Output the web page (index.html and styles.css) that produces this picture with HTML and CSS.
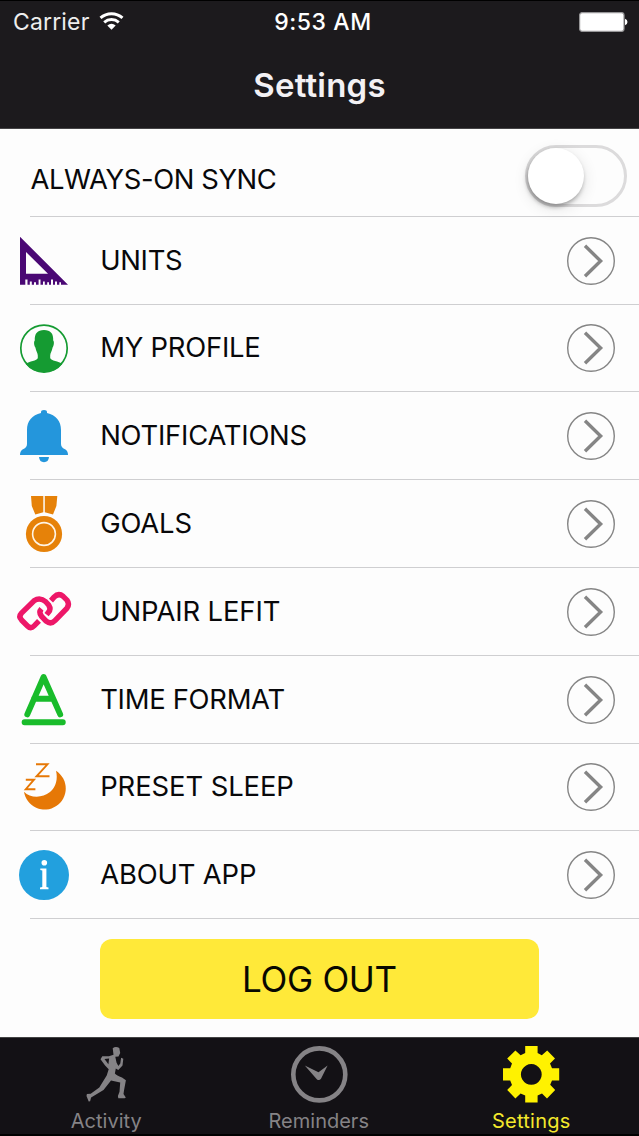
FILE: index.html
```html
<!DOCTYPE html>
<html lang="en">
<head>
<meta charset="utf-8">
<title>Settings</title>
<link rel="stylesheet" href="styles.css">
</head>
<body>
<svg class="defs" width="0" height="0">
  <symbol id="go" viewBox="0 0 50 50">
    <circle cx="25" cy="25" r="23.3" fill="none" stroke="#858585" stroke-width="1.4"/>
    <path d="M19 9.8 34.6 25 19 40.2" fill="none" stroke="#858585" stroke-width="3.4"/>
  </symbol>
</svg>
<div class="screen">
  <header class="header">
    <div class="status">
      <div class="carrier"><span class="carrier-name">Carrier</span>
        <svg class="wifi" width="26" height="20" viewBox="0 0 26 20"><g fill="none" stroke="#fff" stroke-width="2.9"><path d="M1.5 6.9a16.5 16.5 0 0 1 22 0"/><path d="M5.2 11.3a11 11 0 0 1 14.6 0"/></g><path d="M8.3 14.5a6.5 6.5 0 0 1 8.4 0L12.5 18.8z" fill="#fff"/></svg>
      </div>
      <span class="time">9:53 AM</span>
      <svg class="battery" width="50" height="20" viewBox="0 0 50 20"><rect x=".6" y=".6" width="44.4" height="18.8" rx="2.6" fill="#fff" stroke="#969597" stroke-width="1.2"/><path d="M46 6.8q2.5.8 2.5 3.2t-2.5 3.2z" fill="#fff"/></svg>
    </div>
    <h1 class="title"><span>Settings</span></h1>
  </header>
  <main class="list">
    <div class="row row-sync"><span class="label l-sync">ALWAYS-ON SYNC</span><span class="switch"><span class="knob"></span></span></div>
    <div class="row">
      <svg class="icon" viewBox="0 217 88 88"><path fill="#4a0874" fill-rule="evenodd" d="M20 236.8 68 284.7H61V282.3H59.3V284.7H57V281.5H55V284.7H53V279.5H51V284.7H49V282.3H47.2V284.7H44.8V281.5H43V284.7H40.5V279.5H38.6V284.7H36V282.3H34V284.7H31.8V281.5H29.8V284.7H27.5V279.5H25.3V284.7H20zM26 252V273.7H48z"/></svg>
      <span class="label l-units">UNITS</span><svg class="go"><use href="#go"/></svg></div>
    <div class="row">
      <svg class="icon" viewBox="0 305 88 88"><circle cx="44" cy="348.3" r="23.2" fill="none" stroke="#159b32" stroke-width="1.7"/><path fill="#159b32" d="M44 330C50.5 330 53.6 333.5 53.2 340.5 54.4 341.5 54 345.5 52.6 347.5 52 351 50.2 353 50.2 355.5V358C51 360.8 58.5 361.2 62.6 363.8A23.4 23.4 0 0 1 25.4 363.8C29.5 361.2 37 360.8 37.8 358V355.5C37.8 353 36 351 35.4 347.5 34 345.5 33.6 341.5 34.8 340.5 34.4 333.5 37.5 330 44 330z"/></svg>
      <span class="label l-profile">MY PROFILE</span><svg class="go"><use href="#go"/></svg></div>
    <div class="row">
      <svg class="icon" viewBox="0 392 88 88"><path fill="#2496dc" d="M41 413V412Q41 410 44 410T47 412V413C56 415 61 421 61 430V444Q61 447.5 65.5 449.5 68 451 68 455H20Q20 451 22.5 449.5 27 447.5 27 444V430C27 421 32 415 41 413zM39 457H49Q48.5 462.2 44 462.2T39 457z"/></svg>
      <span class="label l-notif">NOTIFICATIONS</span><svg class="go"><use href="#go"/></svg></div>
    <div class="row">
      <svg class="icon" viewBox="0 480 88 88"><path fill="#e68209" d="M31 496H43.3V512.2L35.3 514.5 31.8 506zM44.8 496H57.3L56.4 506 53 514.5 44.8 512.2z"/><circle cx="44" cy="534" r="18.1" fill="#e68209"/><circle cx="44" cy="534" r="11.4" fill="none" stroke="#fff4e4" stroke-width="1.6"/></svg>
      <span class="label l-goals">GOALS</span><svg class="go"><use href="#go"/></svg></div>
    <div class="row">
      <svg class="icon" viewBox="0 568 88 88"><g fill="none" stroke="#ed1768" stroke-width="5.4"><path d="M39 620.8 34 626Q30.8 629.2 27.5 626L21.5 620Q18.3 616.6 21.5 613.2L34 600.8Q40 596.8 45.8 601.8L48.8 605.2Q51.4 609.2 48.4 612.4L46.6 614.6"/><path d="M51 600.6 54 597.2Q58.5 592.6 63.2 596.4L67 600.2Q70 604.3 67 608.2L55.2 620.4Q50.8 625 46.2 621.2L41.6 616.4Q38.2 612.4 41.4 608.8"/></g></svg>
      <span class="label l-unpair">UNPAIR LEFIT</span><svg class="go"><use href="#go"/></svg></div>
    <div class="row">
      <svg class="icon" viewBox="0 656 88 88"><g fill="none" stroke="#19bc2b" stroke-width="5.9" stroke-linecap="round" stroke-linejoin="round"><path d="M27.3 714.4 43.6 677 60.2 714.4M34 698.7H53M24.6 722.3H62.8"/></g></svg>
      <span class="label l-format">TIME FORMAT</span><svg class="go"><use href="#go"/></svg></div>
    <div class="row">
      <svg class="icon" viewBox="0 744 88 88"><path fill="#e67806" d="M56 771.8A21 21 0 1 1 24 792.7C30 799 42 799.5 50 793 56 788 58 780 56 771.8z"/><path d="M36 765.3H47.5L36.5 777.3H49.5M25.8 780.7H34L25.8 790.2H35.4" fill="none" stroke="#e67806" stroke-width="1.9"/></svg>
      <span class="label l-sleep">PRESET SLEEP</span><svg class="go"><use href="#go"/></svg></div>
    <div class="row">
      <svg class="icon" viewBox="0 831.2 88 88"><circle cx="44" cy="875.3" r="25" fill="#22a0de"/><circle cx="44.3" cy="863" r="2.8" fill="#fff"/><path fill="#fff" d="M40.3 868.6H46.4V887.2L48.5 887.8V889.4H40V887.8L42.3 887.2V870.8L40.3 870.2z"/></svg>
      <span class="label l-about">ABOUT APP</span><svg class="go"><use href="#go"/></svg></div>
    <div class="action"><button class="logout"><span>LOG OUT</span></button></div>
  </main>
  <nav class="tabs">
    <a class="tab"><svg viewBox="-2.5 0 60 60"><g fill="#858386"><path d="M34.2 4.2Q37.2 1.8 40.8 4L41.7 9 40 12.5 36.8 12.7 38 18.5 39.8 22 41.8 19.5 42.6 13.8 44.8 14.8 44 21.5 39.8 26 37.3 24.6 36.4 29.4Q38 31.2 43.5 33.5L47.4 36.2 45.5 46.5 45 50 47.3 53.4 46.2 54.3 39.8 54.2 39.4 52 41 47.8 41.7 38.5 32.5 36.6 25 46 12.6 53.4 11.6 57.2 10.2 57.4 8 52 8.4 50 12.2 49.8 20.8 43.5 28.2 31.4 30.2 25.2 26.6 21.6 22 15.3 23.8 12.2 30.4 12.2 35 10.7z"/></g><path d="M26 14.9 30.6 14.5 29.9 20.2z" fill="#141216"/></svg><span class="t-activity">Activity</span></a>
    <a class="tab"><svg viewBox="0 0 60 60"><circle cx="30.3" cy="30.4" r="26" fill="none" stroke="#858386" stroke-width="4.6"/><path fill="#858386" d="M15.8 21.5 29.5 28.2 38.6 21.4 32 34.8Q30 37.2 27.8 35.2z"/></svg><span class="t-reminders">Reminders</span></a>
    <a class="tab active"><svg viewBox="0 0 60 60"><path fill="#fff200" fill-rule="evenodd" d="M24.2 2H36.6V9L40.8 11.2 46.2 6.4 54 14.6 49 19.6 51 24.3H58.2V36.6H51L49.2 40.8 54.2 46 46 54.4 41 49.4 36.6 51.4V58.4H24.2V51.4L19.6 49.4 14.4 54.4 6.2 46 11 41 9.2 36.6H2V24.3H9.2L11 19.6 6.2 14.6 14.4 6.4 19.6 11.2 24.2 9zM30.3 20A10.4 10.4 0 1 0 30.31 20z"/></svg><span class="t-settings">Settings</span></a>
  </nav>
</div>
</body>
</html>
```
FILE: styles.css
```css
* { box-sizing: border-box; }
body { margin: 0; background: #fdfdfd; color: #08080a; font-family: Inter, "Liberation Sans", sans-serif; }
.defs { display: block; height: 0; }
.screen { width: 639px; height: 1136px; display: flex; flex-direction: column; overflow: hidden; }

.header { height: 129px; background: #1c1a1d; border-top: 1px solid #000; border-bottom: 1px solid #454446; color: #fff; }
.status { height: 40px; padding: 1px 10px 0 13px; display: grid; grid-template-columns: 1fr auto 1fr; align-items: center; font-size: 23px; }
.carrier { display: flex; align-items: center; gap: 10px; color: #eee; letter-spacing: 0.15px; }
.wifi { display: block; margin-top: -2px; }
.time { font-weight: 500; font-size: 23px; letter-spacing: 0.6px; padding-left: 4px; padding-top: 1px; }
.battery { justify-self: end; }
.title { margin: 0; height: 87px; display: flex; align-items: center; justify-content: center; font-size: 33px; font-weight: 600; letter-spacing: 0.2px; color: #f3f1f4; }

.list { height: 907.5px; display: flex; flex-direction: column; }
.row { height: 87.8px; flex: none; display: flex; align-items: center; padding-right: 23px; background: linear-gradient(#cfcfd1, #cfcfd1) 30px 100% / 609px 1px no-repeat; }
.row-sync { padding: 12px 12px 0 30.5px; justify-content: space-between; }
.icon { width: 88px; height: 88px; margin-right: 12.2px; flex: none; }
.label { font-size: 27.4px; flex: 1; white-space: nowrap; padding-bottom: 2px; }
.l-sync { letter-spacing: -0.4px; padding-bottom: 0; }
.l-units { letter-spacing: -0.3px; }
.l-profile { letter-spacing: -0.22px; }
.l-notif { letter-spacing: -0.22px; }
.l-goals { letter-spacing: -0.15px; }
.l-unpair { letter-spacing: -0.1px; }
.l-format { letter-spacing: -0.28px; }
.l-sleep { letter-spacing: -0.08px; }
.l-about { letter-spacing: -0.15px; }
.go { width: 50px; height: 50px; flex: none; }
.switch { width: 102px; height: 62px; margin-bottom: 6px; border: 3px solid #dcdbdc; border-radius: 31px; }
.knob { display: block; width: 56px; height: 56px; border-radius: 50%; background: #fff; box-shadow: -1px 3px 4px rgba(0,0,0,.3), 0 4px 15px rgba(0,0,0,.12); }
.action { flex: 1; display: flex; justify-content: center; align-items: flex-start; padding-top: 20px; }
.logout { width: 439px; height: 80px; border: 0; border-radius: 12px; background: #ffe939; color: #080800; font: 400 35px Inter, "Liberation Sans", sans-serif; letter-spacing: -0.3px; }

.tabs { flex: 1; display: grid; grid-template-columns: repeat(3, 212.5px); background: #131115; border-top: 1px solid #444; border-bottom: 2px solid #000; }
.tab { display: flex; flex-direction: column; align-items: center; color: #858386; font-size: 20px; line-height: 24px; padding-top: 6.5px; }
.tab svg { width: 60px; height: 60px; margin-bottom: 5px; flex: none; }
.active { color: #f4e82c; }
.t-settings { letter-spacing: 0.25px; }
```
